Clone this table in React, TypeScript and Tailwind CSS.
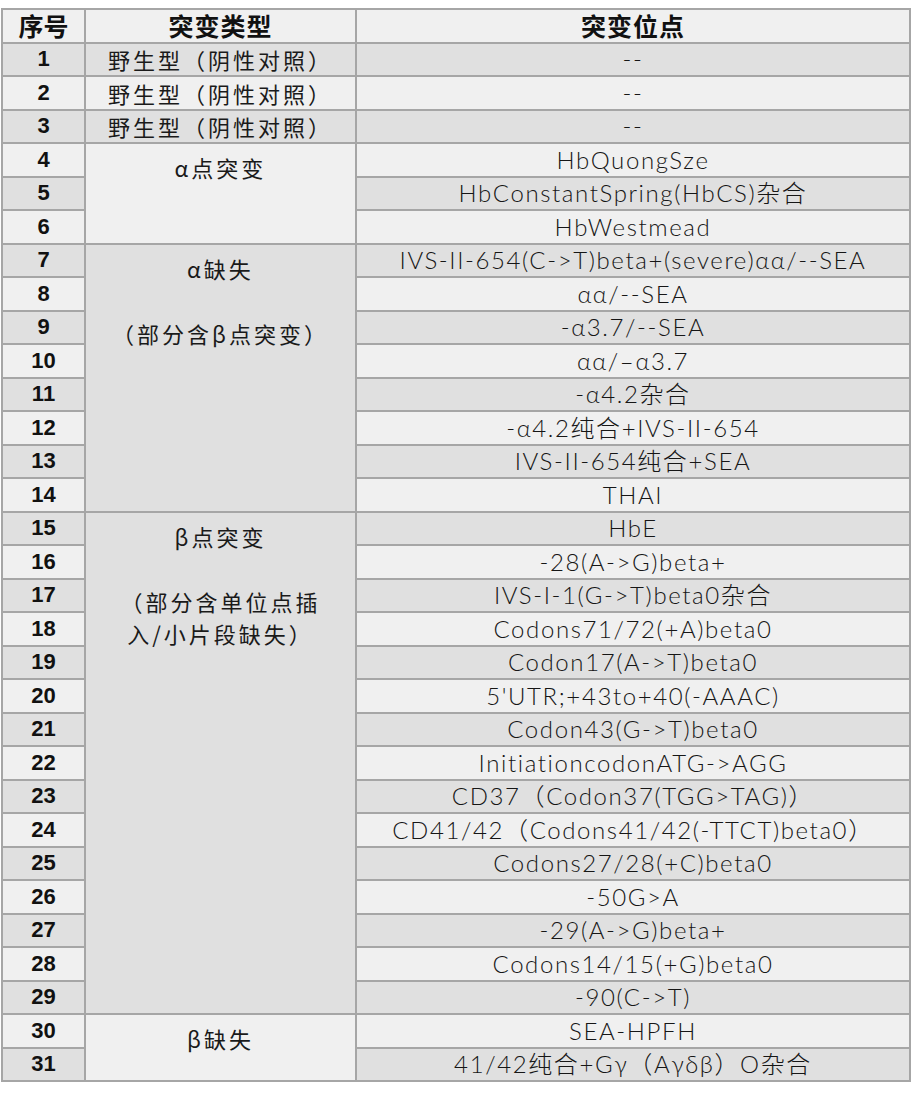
import React from "react";

const sites: string[] = [
  "--",
  "--",
  "--",
  "HbQuongSze",
  "HbConstantSpring(HbCS)杂合",
  "HbWestmead",
  "IVS-II-654(C->T)beta+(severe)αα/--SEA",
  "αα/--SEA",
  "-α3.7/--SEA",
  "αα/–α3.7",
  "-α4.2杂合",
  "-α4.2纯合+IVS-II-654",
  "IVS-II-654纯合+SEA",
  "THAI",
  "HbE",
  "-28(A->G)beta+",
  "IVS-I-1(G->T)beta0杂合",
  "Codons71/72(+A)beta0",
  "Codon17(A->T)beta0",
  "5'UTR;+43to+40(-AAAC)",
  "Codon43(G->T)beta0",
  "InitiationcodonATG->AGG",
  "CD37（Codon37(TGG>TAG)）",
  "CD41/42（Codons41/42(-TTCT)beta0）",
  "Codons27/28(+C)beta0",
  "-50G>A",
  "-29(A->G)beta+",
  "Codons14/15(+G)beta0",
  "-90(C->T)",
  "SEA-HPFH",
  "41/42纯合+Gγ（Aγδβ）O杂合",
];

type Group = { start: number; span: number; lines: string[]; top: boolean; dark: boolean };

const groups: Group[] = [
  { start: 1, span: 1, lines: ["野生型（阴性对照）"], top: false, dark: true },
  { start: 2, span: 1, lines: ["野生型（阴性对照）"], top: false, dark: false },
  { start: 3, span: 1, lines: ["野生型（阴性对照）"], top: false, dark: true },
  { start: 4, span: 3, lines: ["α点突变"], top: true, dark: false },
  { start: 7, span: 8, lines: ["α缺失", "", "（部分含β点突变）"], top: true, dark: true },
  { start: 15, span: 15, lines: ["β点突变", "", "（部分含单位点插", "入/小片段缺失）"], top: true, dark: true },
  { start: 30, span: 2, lines: ["β缺失"], top: true, dark: false },
];

const bd = "border-2 border-[#a6a6a6]";

export default function App() {
  return (
    <div className="w-[914px] h-[1096px] bg-white pt-[8px] pl-[1px]">
      <table className="table-fixed border-collapse w-[910px]">
        <colgroup>
          <col className="w-[83px]" />
          <col className="w-[271px]" />
          <col />
        </colgroup>
        <thead>
          <tr className="h-[33.5px] bg-[#f0f0f0]">
            <th className={`${bd} p-0 text-[25px] leading-none font-bold text-[#111] font-['Noto_Sans_CJK_SC',sans-serif]`}>序号</th>
            <th className={`${bd} p-0 text-[25px] leading-none font-bold text-[#111] font-['Noto_Sans_CJK_SC',sans-serif] tracking-[1px]`}>突变类型</th>
            <th className={`${bd} p-0 text-[25px] leading-none font-bold text-[#111] font-['Noto_Sans_CJK_SC',sans-serif] tracking-[1px]`}>突变位点</th>
          </tr>
        </thead>
        <tbody>
          {sites.map((site, i) => {
            const n = i + 1;
            const dark = n % 2 === 1;
            const g = groups.find((x) => x.start === n);
            return (
              <tr key={n} className={`h-[33.5px] ${dark ? "bg-[#e0e0e0]" : "bg-[#f0f0f0]"}`}>
                <td className={`${bd} p-0 text-center text-[22px] leading-none font-bold text-[#111] font-['Liberation_Sans',sans-serif]`}>
                  {n}
                </td>
                {g && (
                  <td
                    rowSpan={g.span}
                    className={`${bd} px-0 text-center text-[22px] text-[#1a1a1a] font-['Noto_Sans_CJK_SC',sans-serif] tracking-[3px] ${
                      g.top ? "align-top pt-[7px] leading-[32.5px]" : "py-0 leading-none"
                    } ${g.dark ? "bg-[#e0e0e0]" : "bg-[#f0f0f0]"}`}
                  >
                    {g.lines.map((l, k) => (
                      <div key={k} className={l === "" ? "h-[32.5px]" : ""}>
                        {l}
                      </div>
                    ))}
                  </td>
                )}
                <td className={`${bd} p-0 text-center text-[24px] leading-none font-light tracking-[1.6px] text-[#161616] font-['Lato','Noto_Sans_CJK_SC',sans-serif]`}>
                  {site}
                </td>
              </tr>
            );
          })}
        </tbody>
      </table>
    </div>
  );
}
